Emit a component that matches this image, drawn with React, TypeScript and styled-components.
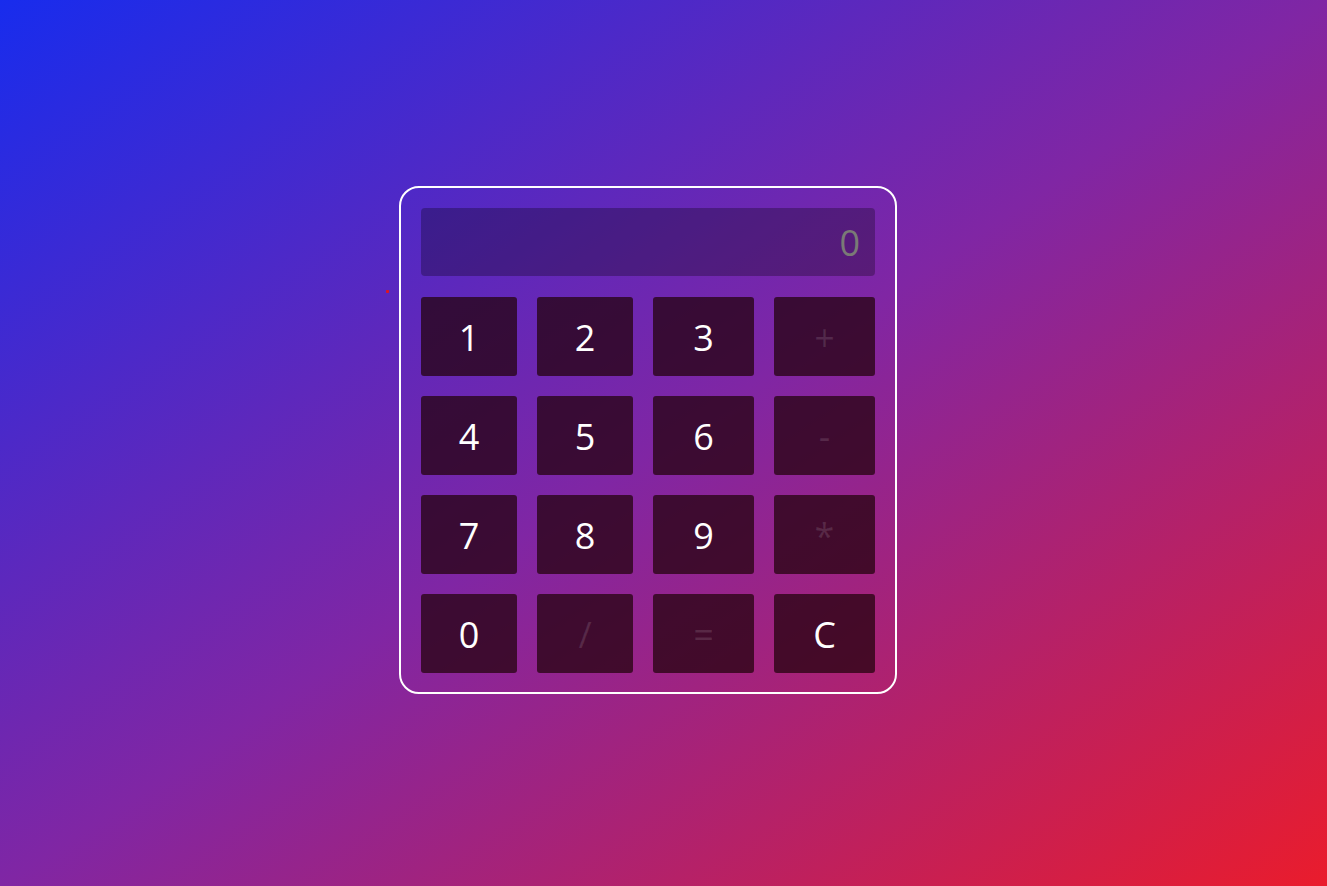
import React, { useState } from "react";
import styled, { createGlobalStyle } from "styled-components";

const GlobalStyle = createGlobalStyle`
  html, body {
    margin: 0;
    padding: 0;
  }
  body {
    min-height: 100vh;
    background: linear-gradient(to bottom right, #182ced 0%, #8026a4 50%, #ea1c2c 100%);
    font-family: "Open Sans", "Noto Sans", sans-serif;
  }
`;

const Page = styled.div`
  min-height: 100vh;
  display: flex;
  align-items: center;
  justify-content: center;
  padding-right: 44px;
  padding-bottom: 6px;
  box-sizing: border-box;
`;

const Row = styled.div`
  display: flex;
  align-items: flex-start;
  gap: 10px;
`;

const Dot = styled.span`
  width: 3px;
  height: 3px;
  margin-top: 104px;
  background: #e0161e;
  border-radius: 1px;
`;

const Card = styled.div`
  width: 498px;
  box-sizing: border-box;
  border: 2px solid #ffffff;
  border-radius: 20px;
  padding: 20px 20px 19px;
`;

const Display = styled.div`
  height: 68px;
  margin-bottom: 21px;
  background: rgba(0, 0, 0, 0.28);
  border-radius: 4px;
  display: flex;
  align-items: center;
  justify-content: flex-end;
  padding: 2px 15px 0;
  box-sizing: border-box;
  color: #7a7a76;
  font-size: 36px;
  line-height: 1;
`;

const Keys = styled.div`
  display: grid;
  grid-template-columns: 96px 96px 101px 101px;
  grid-auto-rows: 79px;
  column-gap: 20px;
  row-gap: 20px;
`;

const Key = styled.button<{ $dim?: boolean }>`
  border: none;
  margin: 0;
  padding: 3px 0 0;
  border-radius: 3px;
  background: rgba(36, 3, 14, 0.75);
  color: ${(p) => (p.$dim ? "rgba(255, 255, 255, 0.12)" : "#ffffff")};
  font-family: "Open Sans", "Noto Sans", sans-serif;
  font-size: 36px;
  line-height: 1;
  display: flex;
  align-items: center;
  justify-content: center;
  cursor: pointer;
`;

const keys: { label: string; dim?: boolean }[] = [
  { label: "1" },
  { label: "2" },
  { label: "3" },
  { label: "+", dim: true },
  { label: "4" },
  { label: "5" },
  { label: "6" },
  { label: "-", dim: true },
  { label: "7" },
  { label: "8" },
  { label: "9" },
  { label: "*", dim: true },
  { label: "0" },
  { label: "/", dim: true },
  { label: "=", dim: true },
  { label: "C" },
];

export default function App() {
  const [value, setValue] = useState("0");
  const press = (k: string) => {
    if (k === "C") setValue("0");
    else if (/\d/.test(k)) setValue((v) => (v === "0" ? k : v + k));
  };
  return (
    <>
      <GlobalStyle />
      <Page>
        <Row>
          <Dot />
          <Card>
            <Display>{value}</Display>
            <Keys>
              {keys.map((k) => (
                <Key key={k.label} $dim={k.dim} onClick={() => press(k.label)}>
                  {k.label}
                </Key>
              ))}
            </Keys>
          </Card>
        </Row>
      </Page>
    </>
  );
}
